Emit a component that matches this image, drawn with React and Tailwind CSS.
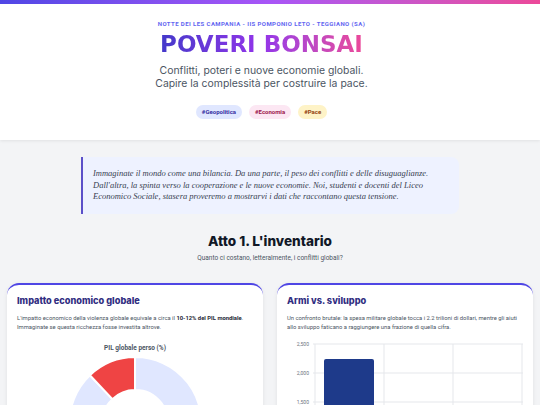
import React from "react";

const head = { fontFamily: "Inter, 'Noto Sans', sans-serif" };
const body = { fontFamily: "Roboto, 'Liberation Sans', sans-serif" };

function Donut() {
  return (
    <svg width="236" height="60" viewBox="0 0 236 60" className="block">
      <path
        d="M 118 5 A 66 66 0 1 1 72.9 23.2 L 95.4 47.1 A 33 33 0 1 0 118 38 Z"
        fill="#e0e7ff"
        stroke="#ffffff"
        strokeWidth="2"
      />
      <path
        d="M 72.9 23.2 A 66 66 0 0 1 118 5 L 118 38 A 33 33 0 0 0 95.4 47.1 Z"
        fill="#ef4444"
        stroke="#ffffff"
        strokeWidth="2"
      />
    </svg>
  );
}

function Bars() {
  const lines = [
    { y: 6, label: "2,500" },
    { y: 35, label: "2,000" },
    { y: 64, label: "1,500" },
  ];
  return (
    <svg width="236" height="70" viewBox="0 0 236 70" className="block">
      {lines.map((l) => (
        <g key={l.label}>
          <line x1="26" x2="236" y1={l.y} y2={l.y} stroke="#e5e7eb" strokeWidth="1" />
          <text
            x="22"
            y={l.y + 1.8}
            textAnchor="end"
            fontSize="5"
            fill="#6b7280"
            style={{ fontFamily: "Roboto, sans-serif" }}
          >
            {l.label}
          </text>
        </g>
      ))}
      {[28, 97, 166, 235].map((x) => (
        <line key={x} x1={x} x2={x} y1="6" y2="70" stroke="#e5e7eb" strokeWidth="1" />
      ))}
      <path d="M 37 70 L 37 23 Q 37 21 39 21 L 85 21 Q 87 21 87 23 L 87 70 Z" fill="#1e3a8a" />
    </svg>
  );
}

export default function App() {
  return (
    <div className="min-h-screen bg-[#f3f4f6] overflow-hidden" style={body}>
      <header className="bg-white shadow-[0_1px_3px_rgba(0,0,0,0.08)]">
        <div className="h-[4px] bg-linear-to-r from-[#4f46e5] via-[#a855f7] to-[#ec4899]" />
        <div className="flex flex-col items-center pt-[16px] pb-[21px] pr-[17px] text-center">
          <div className="text-[6px] leading-[8px] font-bold uppercase tracking-[0.07em] text-[#6366f1]">
            Notte dei LES Campania - IIS Pomponio Leto - Teggiano (SA)
          </div>
          <h1
            className="mt-[4px] text-[23px] leading-[24px] font-bold bg-linear-to-r from-[#4338ca] via-[#9333ea] to-[#ec4899] bg-clip-text text-transparent"
            style={{ fontFamily: "'DejaVu Sans', sans-serif" }}
          >
            POVERI BONSAI
          </h1>
          <p className="mt-[8px] text-[10.4px] leading-[13px] text-[#4b5563]" style={head}>
            Conflitti, poteri e nuove economie globali.
            <br />
            Capire la complessità per costruire la pace.
          </p>
          <div className="mt-[15px] flex gap-[7px] text-[6px] font-bold leading-none">
            <span className="flex h-[14px] items-center rounded-full bg-[#e0e7ff] px-[6px] text-[#3730a3]">#Geopolitica</span>
            <span className="flex h-[14px] items-center rounded-full bg-[#fce7f3] px-[6px] text-[#9d174d]">#Economia</span>
            <span className="flex h-[14px] items-center rounded-full bg-[#fef3c7] px-[6px] text-[#92400e]">#Pace</span>
          </div>
        </div>
      </header>

      <div className="mx-auto mt-[17px] w-[378px] rounded-r-lg border-l-2 border-[#5b50c9] bg-[#eef2ff] py-[11px] pl-[10px] pr-[8px]">
        <p
          className="text-[8.5px] leading-[11.5px] italic text-[#374151]"
          style={{ fontFamily: "'Liberation Serif', serif" }}
        >
          Immaginate il mondo come una bilancia. Da una parte, il peso dei conflitti e delle disuguaglianze.
          Dall'altra, la spinta verso la cooperazione e le nuove economie. Noi, studenti e docenti del Liceo
          Economico Sociale, stasera proveremo a mostrarvi i dati che raccontano questa tensione.
        </p>
      </div>

      <div className="mt-[19px] text-center">
        <h2 className="text-[13.6px] leading-[16px] font-extrabold text-[#111827]" style={head}>
          Atto 1. L'inventario
        </h2>
        <p className="mt-[5px] text-[6.5px] leading-[9px] text-[#4b5563]">
          Quanto ci costano, letteralmente, i conflitti globali?
        </p>
      </div>

      <div className="mt-[20px] grid grid-cols-2 gap-[14px] px-[7px]">
        <div className="h-[200px] rounded-xl border-t-2 border-[#4f46e5] bg-white px-[10px] pt-[10px] shadow-[0_1px_4px_rgba(0,0,0,0.08)]">
          <h3 className="text-[9.2px] leading-[12px] font-extrabold text-[#312e81]" style={head}>
            Impatto economico globale
          </h3>
          <p className="mt-[7px] text-[5.85px] leading-[9px] text-[#4b5563]">
            L'impatto economico della violenza globale equivale a circa il{" "}
            <strong className="font-bold text-[#1f2937]">10-12% del PIL mondiale</strong>. Immaginate se questa
            ricchezza fosse investita altrove.
          </p>
          <div className="mt-[12px] text-center text-[6.5px] leading-[8px] font-bold text-[#4b5563]">
            PIL globale perso (%)
          </div>
          <Donut />
        </div>
        <div className="h-[200px] rounded-xl border-t-2 border-[#4f46e5] bg-white px-[10px] pt-[10px] shadow-[0_1px_4px_rgba(0,0,0,0.08)]">
          <h3 className="text-[9.2px] leading-[12px] font-extrabold text-[#312e81]" style={head}>
            Armi vs. sviluppo
          </h3>
          <p className="mt-[7px] text-[5.85px] leading-[9px] text-[#4b5563]">
            Un confronto brutale: la spesa militare globale tocca i 2.2 trilioni di dollari, mentre gli aiuti allo
            sviluppo faticano a raggiungere una frazione di quella cifra.
          </p>
          <div className="mt-[6px]">
            <Bars />
          </div>
        </div>
      </div>
    </div>
  );
}
